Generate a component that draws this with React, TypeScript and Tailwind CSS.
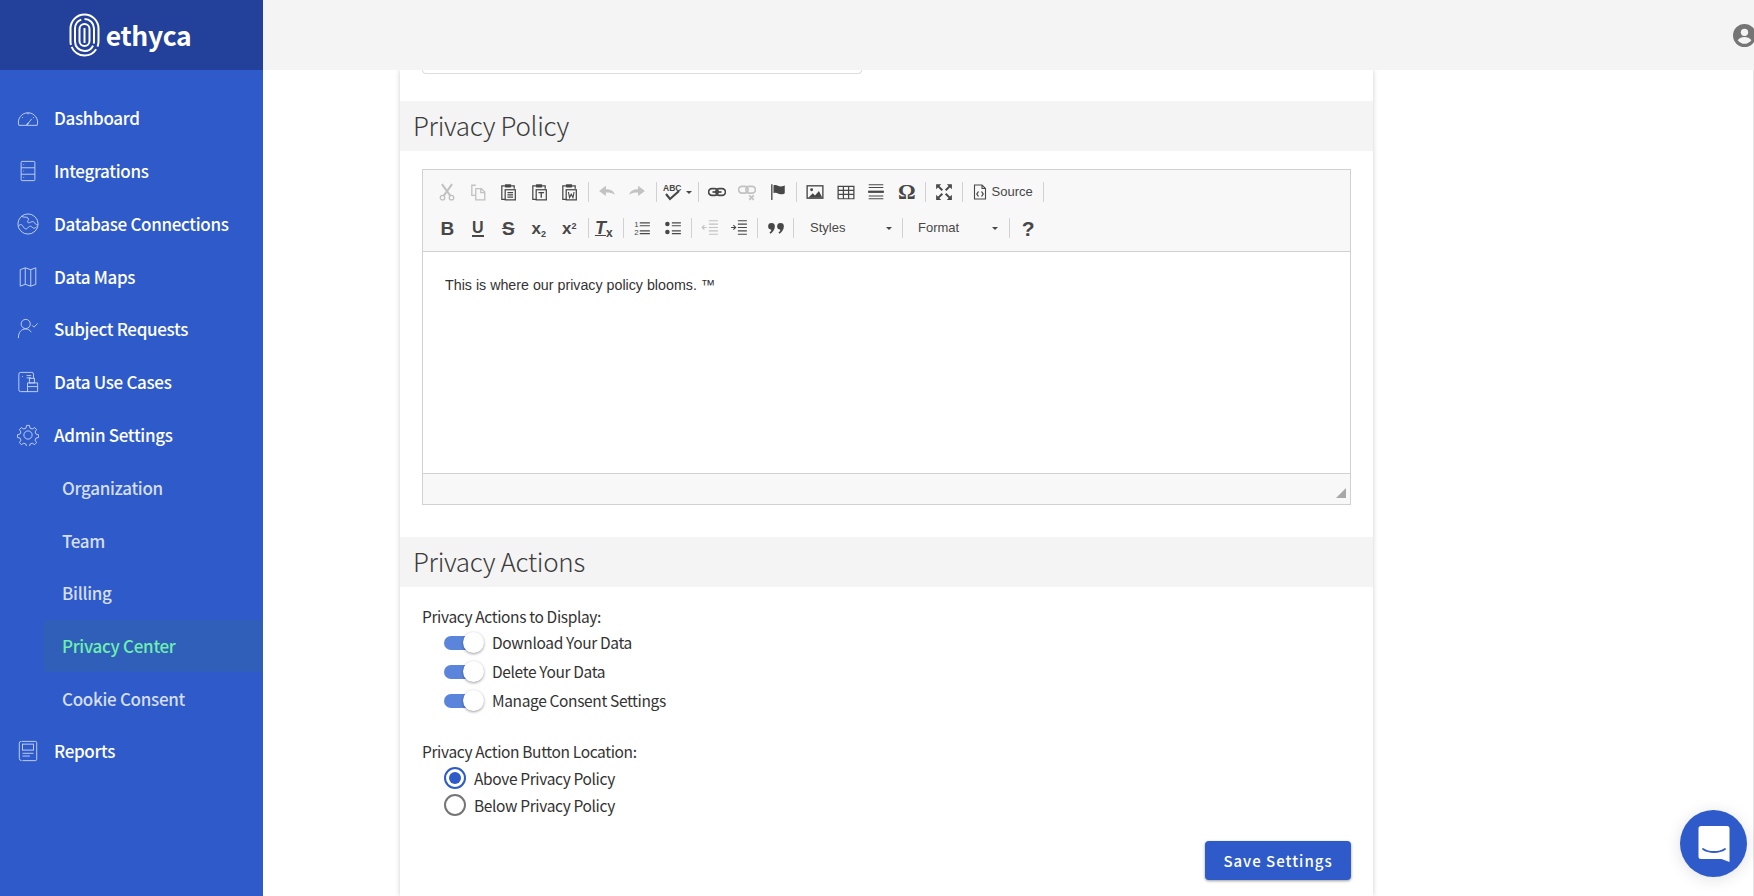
import type { ReactNode } from 'react'

const sans = 'font-["Noto_Sans_CJK_SC","Source_Sans_Pro","Noto_Sans",sans-serif]'

function Ico({ children, className = '', size = 22 }: { children: ReactNode; className?: string; size?: number }) {
  return (
    <svg width={size} height={size} viewBox="0 0 24 24" fill="none" stroke="currentColor" strokeWidth="1" className={className}>
      {children}
    </svg>
  )
}

const navIcons: Record<string, ReactNode> = {
  dashboard: (
    <Ico>
      <path d="M2 20a10.500 10.500 0 1 1 20 0z" />
      <path d="M12 18l4-5M5.500 11l1 1M12 6.500v1.500M18.500 11l-1 1" />
      <path d="M10.500 19.500l2-2" strokeWidth="1.500" />
    </Ico>
  ),
  integrations: (
    <Ico>
      <rect x="4.500" y="1.500" width="15" height="21" rx="1" />
      <path d="M4.500 8.500h15M4.500 15.500h15M7 5h.8M7 12h.8M7 19h.8" />
    </Ico>
  ),
  database: (
    <Ico>
      <circle cx="12" cy="12" r="11" />
      <path d="M5 3.500c2 2 5 0 7 2s-2 4 0 5 5-3 7 0 2 2 4 2M1.500 14.500c2-3 4-2 5 0s3 4 5 2 3-3 5-1 3 1 5-.5" />
    </Ico>
  ),
  maps: (
    <Ico>
      <path d="M3.500 4l5.500-2 6 2 5.500-2v18l-5.500 2-6-2-5.500 2zM9 2v18M15 4v18" />
    </Ico>
  ),
  subject: (
    <Ico>
      <circle cx="9.500" cy="6.500" r="5" />
      <path d="M1.500 22c0-7 3.500-10 8-10 2.500 0 4.500 1 6 3.500M16.500 8l2 2 4-4" />
    </Ico>
  ),
  usecases: (
    <Ico>
      <path d="M12 22.500H4a2 2 0 0 1-2-2V3.500a2 2 0 0 1 2-2h12a2 2 0 0 1 2 2V8" />
      <path d="M5.500 6h1M10.500 5h5M10.500 7.500h5" />
      <rect x="13.500" y="8" width="5.500" height="5" />
      <path d="M11.500 13h11v9.500h-11zM11.500 17h11" />
    </Ico>
  ),
  settings: (
    <Ico>
      <circle cx="12" cy="12" r="4.500" />
      <path d="M10.500 1.500h3l.7 3 2.400 1 2.700-1.600 2 2.200-1.600 2.600 1 2.300 2.800.7v3l-2.800.7-1 2.300 1.600 2.600-2 2.200-2.700-1.600-2.400 1-.7 3h-3l-.7-3-2.400-1-2.700 1.600-2-2.200 1.600-2.600-1-2.300-2.800-.7v-3l2.800-.7 1-2.300-1.600-2.600 2-2.200 2.700 1.600 2.400-1z" />
    </Ico>
  ),
  reports: (
    <Ico>
      <path d="M5 1.500h15a1.500 1.500 0 0 1 1.500 1.500v18a1.500 1.500 0 0 1-1.500 1.500H6" />
      <path d="M2.500 3.500v16.500a2.500 2.500 0 0 0 2.500 2.500" />
      <path d="M2.500 3.500a2 2 0 0 1 2-2" />
      <rect x="6" y="4.500" width="12" height="6.500" />
      <path d="M6 14.500h12M6 17.500h8" />
    </Ico>
  ),
}

const mainNav = [
  { label: 'Dashboard', icon: 'dashboard' },
  { label: 'Integrations', icon: 'integrations' },
  { label: 'Database Connections', icon: 'database' },
  { label: 'Data Maps', icon: 'maps' },
  { label: 'Subject Requests', icon: 'subject' },
  { label: 'Data Use Cases', icon: 'usecases' },
  { label: 'Admin Settings', icon: 'settings' },
]

const subNav = ['Organization', 'Team', 'Billing', 'Privacy Center', 'Cookie Consent']

function NavItem({ label, icon }: { label: string; icon: string }) {
  return (
    <div className="flex h-[52.75px] items-center pl-[17px] text-white">
      <span className="flex w-[37px] shrink-0 items-center text-[#c9d6f5]">{navIcons[icon]}</span>
      <span className="text-[17px] font-medium leading-6 tracking-[-0.32px]">{label}</span>
    </div>
  )
}

function Logo() {
  return (
    <div className="flex h-[70px] shrink-0 items-center justify-center bg-[#23419b] pr-[3px]">
      <svg width="31" height="44" viewBox="0 0 31 44" fill="none" stroke="white" strokeWidth="2">
        <rect x="1.500" y="1.500" width="28" height="41" rx="14" strokeDasharray="40 3 30 2 40 3" />
        <rect x="6" y="6" width="19" height="32" rx="9.500" strokeDasharray="30 2 50" />
        <rect x="10.500" y="11" width="10" height="22" rx="5" />
        <path d="M15.500 15v15" />
      </svg>
      <span className="ml-[6px] text-[26.500px] font-bold leading-none tracking-[-0.3px] text-white">ethyca</span>
    </div>
  )
}

function Sidebar() {
  return (
    <aside className="flex w-[263px] shrink-0 flex-col bg-[#2e5bc9]">
      <Logo />
      <nav className="pt-[22px]">
        {mainNav.map((item) => (
          <NavItem key={item.label} {...item} />
        ))}
        {subNav.map((label) => {
          const active = label === 'Privacy Center'
          return (
            <div
              key={label}
              className={
                active
                  ? 'ml-[44px] flex h-[52.75px] items-center bg-[#305fb9] pl-[18px] text-[17px] font-medium tracking-[-0.3px] text-[#6cf0ae]'
                  : 'ml-[44px] flex h-[52.75px] items-center pl-[18px] text-[17px] font-medium tracking-[-0.3px] text-[#d5def3]'
              }
            >
              {label}
            </div>
          )
        })}
        <NavItem label="Reports" icon="reports" />
      </nav>
    </aside>
  )
}

function Tool({ children, off, w = 'w-[30.5px]' }: { children: ReactNode; off?: boolean; w?: string }) {
  return (
    <span className={`flex h-[26px] shrink-0 items-center justify-center text-[#474747] ${w} ${off ? 'opacity-30' : ''}`}>
      {children}
    </span>
  )
}

function Sep() {
  return <span className="mx-[3px] h-[20px] w-px shrink-0 bg-[#d1d1d1]" />
}

function Caret() {
  return <span className="h-0 w-0 border-x-[3px] border-t-[3px] border-x-transparent border-t-[#474747]" />
}

function I({ children }: { children: ReactNode }) {
  return (
    <svg width="18" height="18" viewBox="0 0 16 16" fill="none" stroke="currentColor" strokeWidth="1.200">
      {children}
    </svg>
  )
}

function Clip({ children }: { children: ReactNode }) {
  return (
    <I>
      <path d="M5 2.500H2.500v12H6" strokeWidth="1.100" />
      <path d="M11 2.500h2.500V5" strokeWidth="1.100" />
      <rect x="5" y="1" width="6" height="3" fill="currentColor" stroke="none" rx="1" />
      <rect x="5.500" y="6" width="9" height="9" strokeWidth="1.100" />
      {children}
    </I>
  )
}

function Toolbar() {
  return (
    <div className="flex h-[82px] flex-col gap-[10px] border-b border-[#d1d1d1] bg-[#f8f8f8] pl-[9px] pt-[9px]">
      <div className="flex items-center">
        <Tool off>
          <I>
            <circle cx="4" cy="13" r="2" />
            <circle cx="12" cy="13" r="2" />
            <path d="M5 11.500L12.500 1M11 11.500L3.500 1" strokeWidth="1.800" />
          </I>
        </Tool>
        <Tool off>
          <I>
            <path d="M6 2H2.500v9H6" />
            <path d="M6 5h5l3 3v7H6zM10.500 5v3.500H14" />
          </I>
        </Tool>
        <Tool>
          <Clip>
            <path d="M7.500 8.500h5M7.500 10.500h5M7.500 12.500h5" />
          </Clip>
        </Tool>
        <Tool>
          <Clip>
            <path d="M7.500 8.500h5M10 8.500v4.500" />
          </Clip>
        </Tool>
        <Tool>
          <Clip>
            <path d="M7.500 8l1 5 1.500-3 1.500 3 1-5" strokeWidth="1" />
          </Clip>
        </Tool>
        <Sep />
        <Tool off>
          <I>
            <path d="M1 7l6-4.500v3c4 0 7 1.500 8 5-2-1.500-4-2-8-2v3z" fill="currentColor" stroke="none" />
          </I>
        </Tool>
        <Tool off>
          <I>
            <path d="M15 7L9 2.500v3c-4 0-7 1.500-8 5 2-1.500 4-2 8-2v3z" fill="currentColor" stroke="none" />
          </I>
        </Tool>
        <Sep />
        <Tool w="w-[35px]">
          <span className="flex items-center gap-[3px]">
            <svg width="20" height="20" viewBox="0 0 20 20" fill="none" stroke="currentColor">
              <text x="0" y="8.500" fontSize="8.500" fontWeight="700" fill="currentColor" stroke="none" fontFamily="Liberation Sans">ABC</text>
              <path d="M3 12l4 5 9-8" strokeWidth="2.200" />
            </svg>
            <Caret />
          </span>
        </Tool>
        <Sep />
        <Tool>
          <I>
            <rect x="0.500" y="5" width="8.500" height="6" rx="3" strokeWidth="1.500" />
            <rect x="7" y="5" width="8.500" height="6" rx="3" strokeWidth="1.500" />
            <path d="M4 8h8" strokeWidth="1.500" />
          </I>
        </Tool>
        <Tool off>
          <I>
            <rect x="0.500" y="3" width="8.500" height="6" rx="3" strokeWidth="1.500" />
            <rect x="7" y="3" width="8.500" height="6" rx="3" strokeWidth="1.500" />
            <path d="M10 11l4 4M14 11l-4 4" strokeWidth="1.500" />
          </I>
        </Tool>
        <Tool>
          <I>
            <path d="M2.500 1v14" strokeWidth="1.200" />
            <path d="M4 2c3-1 4 1 6.500 1 1.500 0 3-.5 3.500-1v7c-1 .8-2 1-3.500 1-2.500 0-3.500-2-6.500-1z" fill="currentColor" stroke="none" />
          </I>
        </Tool>
        <Sep />
        <Tool>
          <I>
            <rect x="1" y="2.500" width="14" height="11" strokeWidth="1.200" />
            <circle cx="5" cy="6" r="1.300" fill="currentColor" stroke="none" />
            <path d="M2 13l4-4 2 2 3.500-4L14.500 13z" fill="currentColor" stroke="none" />
          </I>
        </Tool>
        <Tool>
          <I>
            <path d="M1 3h14v11H1zM1 6.500h14M1 10.200h14M5.700 3v11M10.300 3v11" strokeWidth="1.100" />
          </I>
        </Tool>
        <Tool>
          <I>
            <path d="M1.500 1.500h13M1.500 4h13M1.500 11.500h13M1.500 14h13" strokeWidth="0.900" />
            <path d="M1 7.800h14" strokeWidth="2" />
          </I>
        </Tool>
        <Tool>
          <span className="font-['Liberation_Serif',serif] text-[22px] font-bold leading-none">Ω</span>
        </Tool>
        <Sep />
        <Tool w="w-[29.5px]">
          <I>
            <path d="M1 1h4.500L1 5.500zM15 1v4.500L10.500 1zM1 15v-4.500L5.500 15zM15 15h-4.500L15 10.500z" fill="currentColor" stroke="none" />
            <path d="M3 3l3.500 3.500M13 3L9.500 6.500M3 13l3.500-3.500M13 13L9.500 9.500" strokeWidth="1.800" />
          </I>
        </Tool>
        <Sep />
        <span className="flex h-[26px] w-[74px] shrink-0 items-center gap-[5px] pl-[7px] font-['Liberation_Sans',sans-serif] text-[13px] text-[#474747]">
          <svg width="14" height="16" viewBox="0 0 14 16" fill="none" stroke="currentColor" strokeWidth="1.100" className="shrink-0">
            <path d="M1.500 1h7.500l3.500 3.500v10.500h-11zM9 1v3.500h3.500" />
            <path d="M5.500 7.500L3.800 10l1.700 2.500M8.500 7.500l1.700 2.500-1.700 2.500" strokeWidth="1.300" />
          </svg>
          Source
        </span>
        <Sep />
      </div>
      <div className="flex items-center">
        <Tool>
          <span className="font-['Liberation_Sans',sans-serif] text-[19px] font-bold leading-none">B</span>
        </Tool>
        <Tool>
          <span className="border-b-2 border-[#474747] font-['Liberation_Sans',sans-serif] text-[16px] font-bold leading-[15px]">U</span>
        </Tool>
        <Tool>
          <span className="font-['Liberation_Sans',sans-serif] text-[19px] font-bold leading-none line-through">S</span>
        </Tool>
        <Tool>
          <span className="font-['Liberation_Sans',sans-serif] text-[17px] font-bold leading-none">
            x<span className="relative top-[3px] text-[9px]">2</span>
          </span>
        </Tool>
        <Tool>
          <span className="font-['Liberation_Sans',sans-serif] text-[17px] font-bold leading-none">
            x<span className="relative top-[-5px] text-[9px]">2</span>
          </span>
        </Tool>
        <Sep />
        <Tool w="w-[28.5px]">
          <span className="relative left-[-2px] font-['Liberation_Sans',sans-serif] text-[18px] font-bold italic leading-none underline">
            T<span className="relative top-[3px] text-[12px] not-italic">x</span>
          </span>
        </Tool>
        <Sep />
        <Tool>
          <svg width="18" height="18" viewBox="0 0 16 16" fill="none" stroke="currentColor">
            <text x="1" y="7.500" fontSize="7" fill="currentColor" stroke="none" fontFamily="Liberation Sans">1</text>
            <text x="1" y="14.500" fontSize="7" fill="currentColor" stroke="none" fontFamily="Liberation Sans">2</text>
            <path d="M6 3.500h9M6 6h9M6 10.500h9M6 13h9" strokeWidth="1.100" />
          </svg>
        </Tool>
        <Tool>
          <I>
            <circle cx="3" cy="4.500" r="2" fill="currentColor" stroke="none" />
            <circle cx="3" cy="11.500" r="2" fill="currentColor" stroke="none" />
            <path d="M7 3.500h8M7 6h8M7 10.500h8M7 13h8" strokeWidth="1.100" />
          </I>
        </Tool>
        <Sep />
        <Tool off w="w-[29.5px]">
          <I>
            <path d="M7 1.500h8M7 4.500h8M7 7.500h8M7 10.500h8M7 13.500h8M1 7.500h4M3 5.500l-2 2 2 2" strokeWidth="1" />
          </I>
        </Tool>
        <Tool w="w-[29.5px]">
          <I>
            <path d="M7 1.500h8M7 4.500h8M7 7.500h8M7 10.500h8M7 13.500h8M1 7.500h4M3 5.500l2 2-2 2" strokeWidth="1" />
          </I>
        </Tool>
        <Sep />
        <Tool w="w-[29px]">
          <I>
            <path d="M1 6.500a3 3 0 1 1 6 0c0 3-2 5.500-4 6.500l-.8-1c1-.7 1.600-1.500 1.700-2.500A3 3 0 0 1 1 6.500zM9 6.500a3 3 0 1 1 6 0c0 3-2 5.500-4 6.500l-.8-1c1-.7 1.600-1.500 1.700-2.500A3 3 0 0 1 9 6.500z" fill="currentColor" stroke="none" />
          </I>
        </Tool>
        <Sep />
        <span className="flex h-[26px] w-[102px] shrink-0 items-center justify-between pl-[13px] pr-[7px] font-['Liberation_Sans',sans-serif] text-[13px] text-[#484848]">
          Styles
          <Caret />
        </span>
        <Sep />
        <span className="flex h-[26px] w-[100px] shrink-0 items-center justify-between pl-[12px] pr-[8px] font-['Liberation_Sans',sans-serif] text-[13px] text-[#484848]">
          Format
          <Caret />
        </span>
        <Sep />
        <Tool>
          <span className="font-['Liberation_Sans',sans-serif] text-[21px] font-bold leading-none">?</span>
        </Tool>
      </div>
    </div>
  )
}

function Editor() {
  return (
    <div className="mx-[22px] mt-[18px] border border-[#d1d1d1] tracking-normal">
      <Toolbar />
      <div className="h-[221px] bg-white pl-[22px] pr-[20px] pt-[23px] font-['Liberation_Sans',sans-serif] text-[14.250px] leading-[20px] text-[#333333]">
        This is where our privacy policy blooms. ™
      </div>
      <div className="flex h-[31px] items-end justify-end border-t border-[#d1d1d1] bg-[#f8f8f8] pb-[6px] pr-[4px]">
        <svg width="10" height="10" viewBox="0 0 10 10">
          <path d="M10 0v10H0z" fill="#a8a8a8" />
        </svg>
      </div>
    </div>
  )
}

function SectionTitle({ children }: { children: ReactNode }) {
  return (
    <div className="flex h-[50px] items-center bg-[#f4f4f4] pb-[2px] pl-[13px] text-[26px] font-light leading-none tracking-[-0.3px] text-[#3c3c3c]">
      {children}
    </div>
  )
}

function Toggle({ label }: { label: string }) {
  return (
    <div className="flex h-[29px] items-center pl-[22px]">
      <span className="relative block h-[14px] w-[34px] rounded-full bg-[#5b84db]">
        <span className="absolute left-[19px] top-[-4px] block h-[21px] w-[21px] rounded-full bg-white shadow-[0_1px_3px_rgba(0,0,0,0.4)]" />
      </span>
      <span className="ml-[14px] pb-[2px]">{label}</span>
    </div>
  )
}

function Radio({ label, checked }: { label: string; checked?: boolean }) {
  return (
    <div className="flex h-[27px] items-center pl-[22px]">
      <span
        className={
          checked
            ? 'flex h-[22px] w-[22px] items-center justify-center rounded-full border-2 border-[#2e5bc9]'
            : 'flex h-[22px] w-[22px] items-center justify-center rounded-full border-2 border-[#757575]'
        }
      >
        {checked && <span className="h-[12px] w-[12px] rounded-full bg-[#2e5bc9]" />}
      </span>
      <span className="ml-[8px]">{label}</span>
    </div>
  )
}

function ChatBubble() {
  return (
    <div className="fixed left-[1680px] top-[810px] flex h-[67px] w-[67px] items-center justify-center rounded-full bg-[#2e5bc9] shadow-[0_2px_16px_rgba(0,0,0,0.12)]">
      <svg width="32" height="38" viewBox="0 0 32 38">
        <path d="M3 1h26a2.500 2.500 0 0 1 2.500 2.500V37l-8-3H3A2.500 2.500 0 0 1 .5 31.500v-28A2.500 2.500 0 0 1 3 1z" fill="white" />
        <path d="M5 24c6 4 16 4 22 0" fill="none" stroke="#2e5bc9" strokeWidth="1.800" strokeLinecap="round" />
      </svg>
    </div>
  )
}

export default function App() {
  return (
    <div className={`flex h-screen overflow-hidden bg-white ${sans}`}>
      <Sidebar />
      <div className="flex min-w-0 flex-1 flex-col">
        <header className="flex h-[70px] shrink-0 items-center justify-end overflow-hidden bg-[#f4f4f4]">
          <svg width="23" height="23" viewBox="0 0 22 22" className="mr-[-2px] shrink-0">
            <circle cx="11" cy="11" r="11" fill="#757575" />
            <circle cx="11" cy="8" r="3.500" fill="#f4f4f4" />
            <path d="M4.500 15.500c1.500-2 4-3 6.500-3s5 1 6.500 3c-1.500 2-4 3.500-6.500 3.500s-5-1.500-6.500-3.500z" fill="#f4f4f4" />
          </svg>
        </header>
        <main className="flex-1 overflow-hidden border-r border-[#e4e4e4]">
          <section className="ml-[137px] h-full w-[973px] text-[15.500px] leading-6 tracking-[-0.36px] text-[#333333] shadow-[0_0_5px_rgba(0,0,0,0.2)]">
            <div className="mx-[22px] h-[4px] w-[440px] rounded-b-[6px] border border-t-0 border-[#dddddd]" />
            <div className="h-[27px]" />
            <SectionTitle>Privacy Policy</SectionTitle>
            <Editor />
            <div className="h-[32px]" />
            <SectionTitle>Privacy Actions</SectionTitle>
            <div className="px-[22px] pt-[17px]">
              <div>Privacy Actions to Display:</div>
              <Toggle label="Download Your Data" />
              <Toggle label="Delete Your Data" />
              <Toggle label="Manage Consent Settings" />
              <div className="mb-[1px] mt-[24px]">Privacy Action Button Location:</div>
              <Radio label="Above Privacy Policy" checked />
              <Radio label="Below Privacy Policy" />
              <div className="mt-[23px] flex justify-end">
                <button className="h-[39px] w-[146px] rounded-[4px] bg-[#2e5bc9] text-[15px] font-medium tracking-[1px] text-white shadow-[0_1px_3px_rgba(0,0,0,0.4)]">
                  Save Settings
                </button>
              </div>
            </div>
          </section>
        </main>
      </div>
      <ChatBubble />
    </div>
  )
}
